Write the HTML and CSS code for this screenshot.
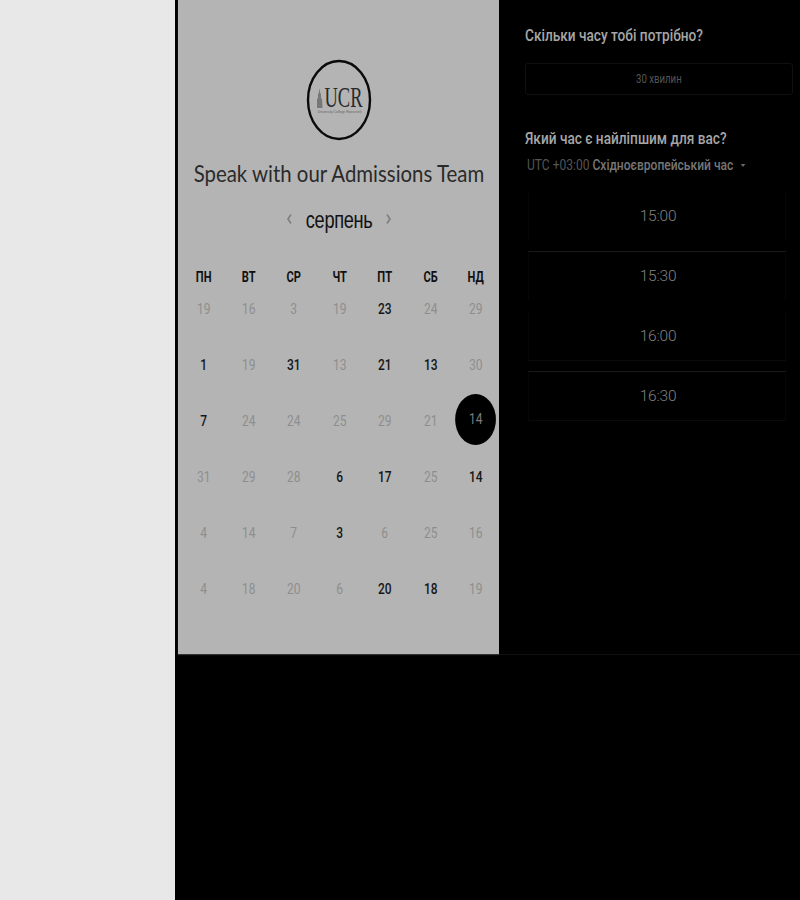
FILE: index.html
```html
<!DOCTYPE html>
<html lang="uk">
<head>
<meta charset="utf-8">
<title>Speak with our Admissions Team</title>
<link rel="stylesheet" href="styles.css">
</head>
<body>
<div class="page">
  <aside class="side"></aside>
  <main class="main">
    <div class="booking">
      <section class="cal-panel">
        <svg class="logo" width="66" height="82" viewBox="0 0 66 82" role="img" aria-label="UCR">
          <ellipse cx="33" cy="41" rx="31" ry="39" fill="none" stroke="#0a0a0a" stroke-width="2.4"/>
          <path d="M11 49V40l1-1v-4l.8-1 .7-5 .7 5 .8 1v4l1 1 .5 9z" fill="#777"/>
          <text x="18.500" y="48" class="logo-main" textLength="38" lengthAdjust="spacingAndGlyphs">UCR</text>
          <text x="33.500" y="54" class="logo-sub" text-anchor="middle" textLength="44" lengthAdjust="spacingAndGlyphs">University College Roosevelt</text>
        </svg>
        <h1 class="title">Speak with our Admissions Team</h1>
        <div class="month-nav">
          <svg class="chev" width="7" height="12" viewBox="0 0 7 12"><path d="M5 1.500 2 6l3 4.500" fill="none" stroke="#808080" stroke-width="1.700"/></svg>
          <span class="month">серпень</span>
          <svg class="chev" width="7" height="12" viewBox="0 0 7 12"><path d="M2 1.500 5 6l-3 4.500" fill="none" stroke="#808080" stroke-width="1.700"/></svg>
        </div>
        <div class="weekdays">
          <span>ПН</span><span>ВТ</span><span>СР</span><span>ЧТ</span><span>ПТ</span><span>СБ</span><span>НД</span>
        </div>
        <div class="days">
          <span>19</span><span>16</span><span>3</span><span>19</span><span class="on">23</span><span>24</span><span>29</span>
          <span class="on">1</span><span>19</span><span class="on">31</span><span>13</span><span class="on">21</span><span class="on">13</span><span>30</span>
          <span class="on">7</span><span>24</span><span>24</span><span>25</span><span>29</span><span>21</span><span class="sel">14</span>
          <span>31</span><span>29</span><span>28</span><span class="on">6</span><span class="on">17</span><span>25</span><span class="on">14</span>
          <span>4</span><span>14</span><span>7</span><span class="on">3</span><span>6</span><span>25</span><span>16</span>
          <span>4</span><span>18</span><span>20</span><span>6</span><span class="on">20</span><span class="on">18</span><span>19</span>
        </div>
      </section>
      <section class="time-panel">
        <h2 class="q q-first">Скільки часу тобі потрібно?</h2>
        <div class="duration"><span class="duration-label">30 хвилин</span></div>
        <h2 class="q q-second">Який час є найліпшим для вас?</h2>
        <div class="tz">UTC +03:00 <b>Східноєвропейський час</b><i class="caret"></i></div>
        <ul class="slots">
          <li class="slot">15:00</li>
          <li class="slot slot-lined">15:30</li>
          <li class="slot slot-under">16:00</li>
          <li class="slot slot-lined">16:30</li>
        </ul>
      </section>
    </div>
  </main>
</div>
</body>
</html>
```
FILE: styles.css
```css
* { box-sizing: border-box; }
html, body { margin: 0; height: 100%; }
body { background: #000; font-family: Roboto, "Liberation Sans", sans-serif; }
.page { display: flex; height: 900px; overflow: hidden; }
.side { width: 175px; background: #e8e8e8; flex: none; }
.main { flex: 1; min-width: 0; background: #000; padding-left: 3px; }
.booking { display: flex; height: 655px; border-bottom: 1px solid #111; }
.cal-panel { width: 321px; flex: none; background: #b4b4b4; padding-top: 59px; display: flex; flex-direction: column; align-items: center; box-shadow: 0 1px 1px #333; }
.logo { display: block; flex: none; }
.logo-main { font-family: "Liberation Serif", serif; font-size: 29px; fill: #2a2a2a; }
.logo-sub { font-family: "Liberation Sans", sans-serif; font-size: 3px; fill: #666; }
.title { margin: 17px 0 0; height: 30px; font: 400 24px/30px Lato, sans-serif; color: #2a2a2a; white-space: nowrap; transform: scaleX(.85); }
.month-nav { margin-top: 17px; height: 30px; padding-left: 1px; display: flex; align-items: center; justify-content: center; gap: 4px; }
.month { font: 400 23px/30px "Liberation Sans", sans-serif; color: #111; letter-spacing: -.4px; transform: scaleX(.79); }
.chev { display: block; margin-top: -2px; }
.weekdays, .days { width: 318px; display: grid; grid-template-columns: repeat(7, 1fr); margin-left: 2px; }
.weekdays { margin-top: 30px; height: 24px; align-items: center; text-align: center; font: 700 15px/24px Roboto, sans-serif; color: #111; }
.weekdays span { display: block; transform: scaleX(.74); }
.days { grid-auto-rows: 56px; margin-top: -8px; }
.days span { display: flex; align-items: center; justify-content: center; font: 400 15px/20px Roboto, sans-serif; color: #8e8e8e; transform: scaleX(.8); }
.days .on { color: #171717; font-weight: 500; }
.days .sel { color: #7c7c7c; position: relative; z-index: 0; padding-bottom: 4px; }
.days .sel::before { content: ""; position: absolute; z-index: -1; left: 50%; top: 50%; width: 51px; height: 51px; margin: -27px 0 0 -25.500px; border-radius: 50%; background: #000; }
.time-panel { width: 301px; flex: none; padding: 0 7px 0 26px; background: #000; }
.q { margin: 0; font: 500 16.500px/20px Roboto, sans-serif; color: #a6a6a6; white-space: nowrap; transform: scaleX(.827); transform-origin: left center; }
.q-first { margin-top: 26px; }
.q-second { margin-top: 34px; }
.duration { margin-top: 17px; height: 32px; border: 1px solid #101010; border-radius: 3px; display: flex; align-items: center; justify-content: center; font: 400 13px/16px Roboto, sans-serif; color: #555; }
.duration-label { display: block; transform: scaleX(.74); }
.tz { margin: 6px 0 0 2px; font: 400 15.500px/20px Roboto, sans-serif; color: #555; display: flex; align-items: center; white-space: pre; transform: scaleX(.777); transform-origin: left center; }
.tz b { font-weight: 500; color: #777; }
.caret { width: 0; height: 0; margin-left: 9px; border: 3px solid transparent; border-top: 3px solid #666; border-bottom-width: 0; }
.slots { list-style: none; margin: 16px 0 0 3px; padding: 0; width: 258px; display: flex; flex-direction: column; gap: 10px; }
.slot { height: 50px; padding-left: 2px; display: flex; align-items: center; justify-content: center; font: 300 15.500px/20px Roboto, sans-serif; letter-spacing: -.2px; color: #808080; border: 1px solid transparent; border-left-color: #070707; border-right-color: #070707; }
.slot-lined { border-top-color: #1a1a1a; }
.slot-lined:last-child { border-bottom-color: #0a0a0a; }
.slot-under { border-bottom-color: #0a0a0a; }
```
